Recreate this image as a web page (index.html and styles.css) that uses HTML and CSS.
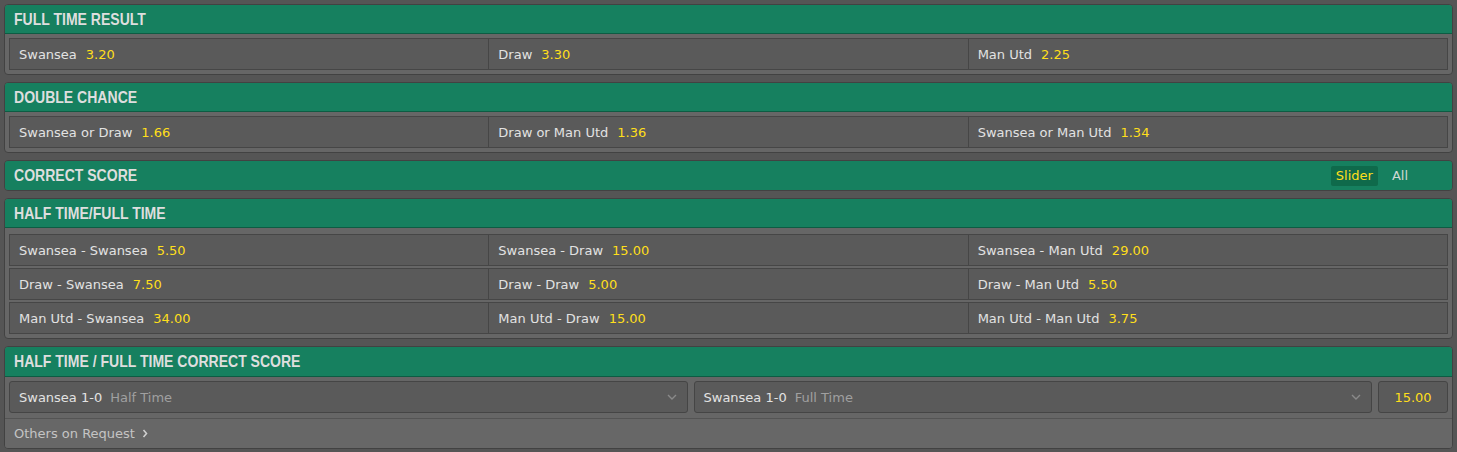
FILE: index.html
```html
<!DOCTYPE html>
<html lang="en">
<head>
  <meta charset="UTF-8">
  <title>Swansea v Man Utd - Markets</title>
  <link rel="stylesheet" href="styles.css">
</head>
<body>
  <div class="markets">
    <div class="market">
      <div class="market-head"><h3>FULL TIME RESULT</h3></div>
      <div class="market-body">
        <div class="odds-row">
          <div class="odd"><span class="name">Swansea</span><span class="price">3.20</span></div>
          <div class="odd"><span class="name">Draw</span><span class="price">3.30</span></div>
          <div class="odd"><span class="name">Man Utd</span><span class="price">2.25</span></div>
        </div>
      </div>
    </div>

    <div class="market">
      <div class="market-head"><h3>DOUBLE CHANCE</h3></div>
      <div class="market-body">
        <div class="odds-row">
          <div class="odd"><span class="name">Swansea or Draw</span><span class="price">1.66</span></div>
          <div class="odd"><span class="name">Draw or Man Utd</span><span class="price">1.36</span></div>
          <div class="odd"><span class="name">Swansea or Man Utd</span><span class="price">1.34</span></div>
        </div>
      </div>
    </div>

    <div class="market">
      <div class="market-head">
        <h3>CORRECT SCORE</h3>
        <div class="view-switch">
          <span class="switch-btn active">Slider</span>
          <span class="switch-btn">All</span>
        </div>
      </div>
    </div>

    <div class="market">
      <div class="market-head"><h3>HALF TIME/FULL TIME</h3></div>
      <div class="market-body rows">
        <div class="odds-row">
          <div class="odd"><span class="name">Swansea - Swansea</span><span class="price">5.50</span></div>
          <div class="odd"><span class="name">Swansea - Draw</span><span class="price">15.00</span></div>
          <div class="odd"><span class="name">Swansea - Man Utd</span><span class="price">29.00</span></div>
        </div>
        <div class="odds-row">
          <div class="odd"><span class="name">Draw - Swansea</span><span class="price">7.50</span></div>
          <div class="odd"><span class="name">Draw - Draw</span><span class="price">5.00</span></div>
          <div class="odd"><span class="name">Draw - Man Utd</span><span class="price">5.50</span></div>
        </div>
        <div class="odds-row">
          <div class="odd"><span class="name">Man Utd - Swansea</span><span class="price">34.00</span></div>
          <div class="odd"><span class="name">Man Utd - Draw</span><span class="price">15.00</span></div>
          <div class="odd"><span class="name">Man Utd - Man Utd</span><span class="price">3.75</span></div>
        </div>
      </div>
    </div>

    <div class="market">
      <div class="market-head"><h3>HALF TIME / FULL TIME CORRECT SCORE</h3></div>
      <div class="market-body picker">
        <div class="select">
          <span class="name">Swansea 1-0</span><span class="hint">Half Time</span>
          <svg class="chevron" width="10" height="6" viewBox="0 0 10 6"><path d="M1 1l4 4 4-4" fill="none" stroke="#8a8a8a" stroke-width="1.4"/></svg>
        </div>
        <div class="select">
          <span class="name">Swansea 1-0</span><span class="hint">Full Time</span>
          <svg class="chevron" width="10" height="6" viewBox="0 0 10 6"><path d="M1 1l4 4 4-4" fill="none" stroke="#8a8a8a" stroke-width="1.4"/></svg>
        </div>
        <div class="price-box">15.00</div>
      </div>
      <div class="market-foot">
        <a href="#" class="request">Others on Request
          <svg width="6" height="9" viewBox="0 0 6 9"><path d="M1.5 1l3 3.5-3 3.5" fill="none" stroke="#cfcfcf" stroke-width="1.6"/></svg>
        </a>
      </div>
    </div>
  </div>
</body>
</html>
```

FILE: styles.css
```css
body {
  margin: 0;
  background: #555;
  font-family: "DejaVu Sans", Verdana, sans-serif;
  font-size: 13px;
  color: #e2e2e2;
}
.markets {
  padding: 4px 4px 0;
}
.market {
  background: #666;
  border: 1px solid #424242;
  border-radius: 4px;
  margin-bottom: 7px;
  overflow: hidden;
}
.market-head {
  display: flex;
  align-items: center;
  justify-content: space-between;
  height: 28px;
  padding: 0 9px;
  background: #16805f;
  border-bottom: 1px solid #0d5c43;
}
.market:nth-child(3) .market-head {
  border-bottom: none;
  height: 29px;
}
.market:nth-child(5) .market-head {
  height: 29px;
}
/* no narrow face installed, so squeeze the bold sans */
.market-head h3 {
  margin: 0;
  display: inline-block;
  font-family: "Liberation Sans", Arial, sans-serif;
  font-weight: bold;
  font-size: 16.5px;
  color: #dedede;
  transform: scaleX(0.85);
  transform-origin: left center;
  white-space: nowrap;
}
.view-switch {
  display: flex;
  align-items: center;
  gap: 9px;
  padding-right: 30px;
}
.switch-btn {
  padding: 2px 5px 3px;
  border-radius: 2px;
  color: #cfd8d4;
}
.switch-btn.active {
  background: #0f6a4b;
  color: #ffdf1b;
}
.market-body {
  padding: 4px 4px 4px;
}
.market-body.rows {
  display: flex;
  flex-direction: column;
  gap: 2px;
  padding-top: 6px;
  padding-bottom: 4px;
}
.odds-row {
  display: flex;
  height: 30px;
  border: 1px solid #464646;
  background: #5a5a5a;
}
.odd {
  flex: 1;
  display: flex;
  align-items: center;
  padding: 0 9px;
  border-left: 1px solid #464646;
}
.odd:first-child {
  border-left: none;
}
.name {
  color: #e2e2e2;
}
.price {
  margin-left: 9px;
  color: #ffdf1b;
}
.picker {
  display: flex;
  gap: 6px;
  padding-top: 4px;
  padding-bottom: 5px;
}
.select {
  flex: 1;
  display: flex;
  align-items: center;
  height: 30px;
  padding: 0 10px 0 9px;
  background: #5a5a5a;
  border: 1px solid #454545;
  border-radius: 3px;
}
.hint {
  margin-left: 8px;
  color: #a0a0a0;
}
.chevron {
  margin-left: auto;
}
.price-box {
  width: 68px;
  display: flex;
  align-items: center;
  justify-content: center;
  background: #5a5a5a;
  border: 1px solid #454545;
  border-radius: 3px;
  color: #ffdf1b;
}
.market-foot {
  border-top: 1px solid #545454;
  height: 29px;
  display: flex;
  align-items: center;
  padding: 0 9px;
  background: #676767;
}
.request {
  color: #c4c4c4;
  text-decoration: none;
  display: flex;
  align-items: center;
  gap: 7px;
}
```
